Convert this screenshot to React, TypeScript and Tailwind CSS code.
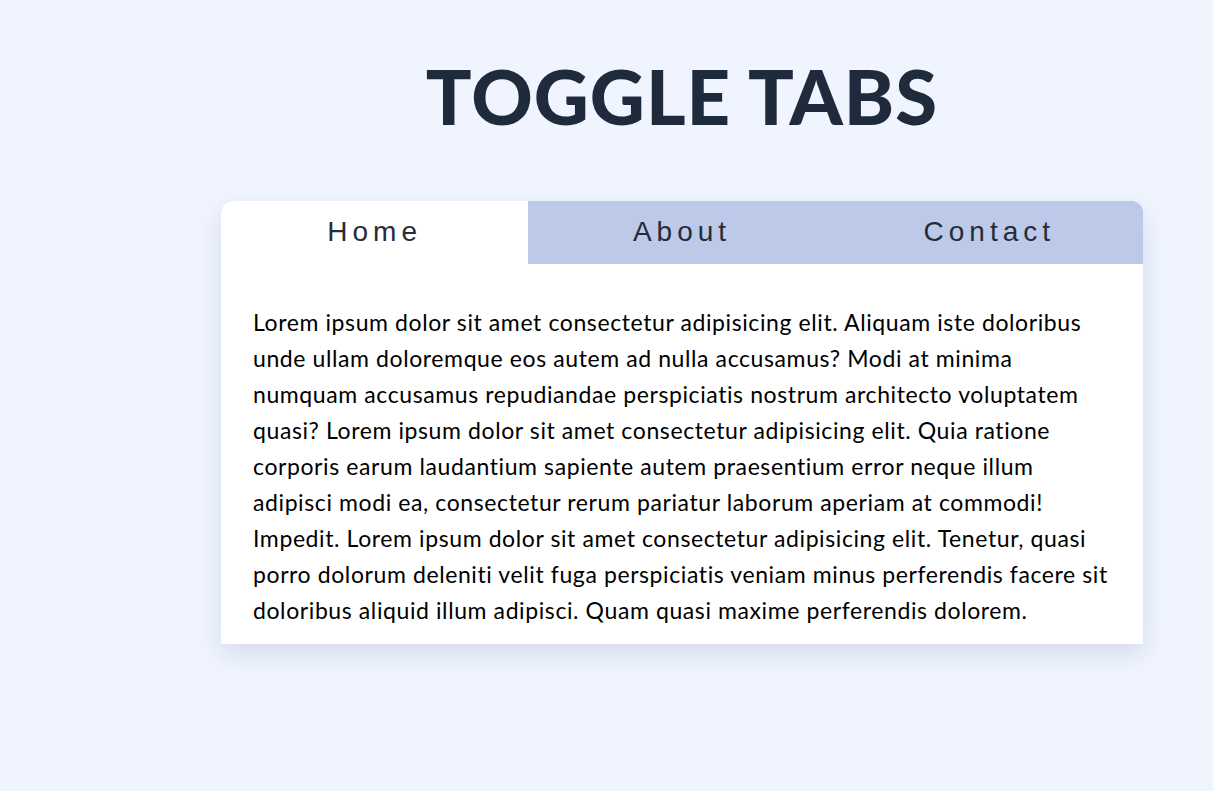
import React, { useState } from "react";

const tabs = ["Home", "About", "Contact"];

export default function App() {
  const [active, setActive] = useState(0);
  return (
    <div className="min-h-[791px] w-full bg-[#eff4fe] pt-[52px]" style={{ fontFamily: "Lato, sans-serif" }}>
      <h1 className="ml-[221px] w-[922px] text-center text-[76px] font-black leading-[88px] tracking-[1px] text-[#1f2a3c]" style={{ fontFamily: "Lato, sans-serif" }}>
        TOGGLE TABS
      </h1>
      <div className="ml-[221px] mt-[61px] w-[922px] overflow-hidden rounded-t-[12px] bg-white shadow-[0_10px_25px_rgba(30,50,100,0.12)]">
        <div className="flex h-[63px] bg-[#bcc9e8]">
          {tabs.map((t, i) => (
            <button
              key={t}
              onClick={() => setActive(i)}
              className={`flex flex-1 items-center justify-center pb-[2px] text-[28px] tracking-[5px] text-[#262c38] ${i === active ? "bg-white" : "bg-[#bcc9e8]"}`}
              style={{ fontFamily: '"Liberation Sans", Arial, sans-serif' }}
            >
              {t}
            </button>
          ))}
        </div>
        <div className="px-[32px] pb-[16px] pt-[40px] text-[23px] leading-[36px] tracking-[0.6px] text-black">
          <p className="whitespace-nowrap">
            Lorem ipsum dolor sit amet consectetur adipisicing elit. Aliquam iste doloribus<br />
            unde ullam doloremque eos autem ad nulla accusamus? Modi at minima<br />
            numquam accusamus repudiandae perspiciatis nostrum architecto voluptatem<br />
            quasi? Lorem ipsum dolor sit amet consectetur adipisicing elit. Quia ratione<br />
            corporis earum laudantium sapiente autem praesentium error neque illum<br />
            adipisci modi ea, consectetur rerum pariatur laborum aperiam at commodi!<br />
            Impedit. Lorem ipsum dolor sit amet consectetur adipisicing elit. Tenetur, quasi<br />
            porro dolorum deleniti velit fuga perspiciatis veniam minus perferendis facere sit<br />
            doloribus aliquid illum adipisci. Quam quasi maxime perferendis dolorem.
          </p>
        </div>
      </div>
    </div>
  );
}
